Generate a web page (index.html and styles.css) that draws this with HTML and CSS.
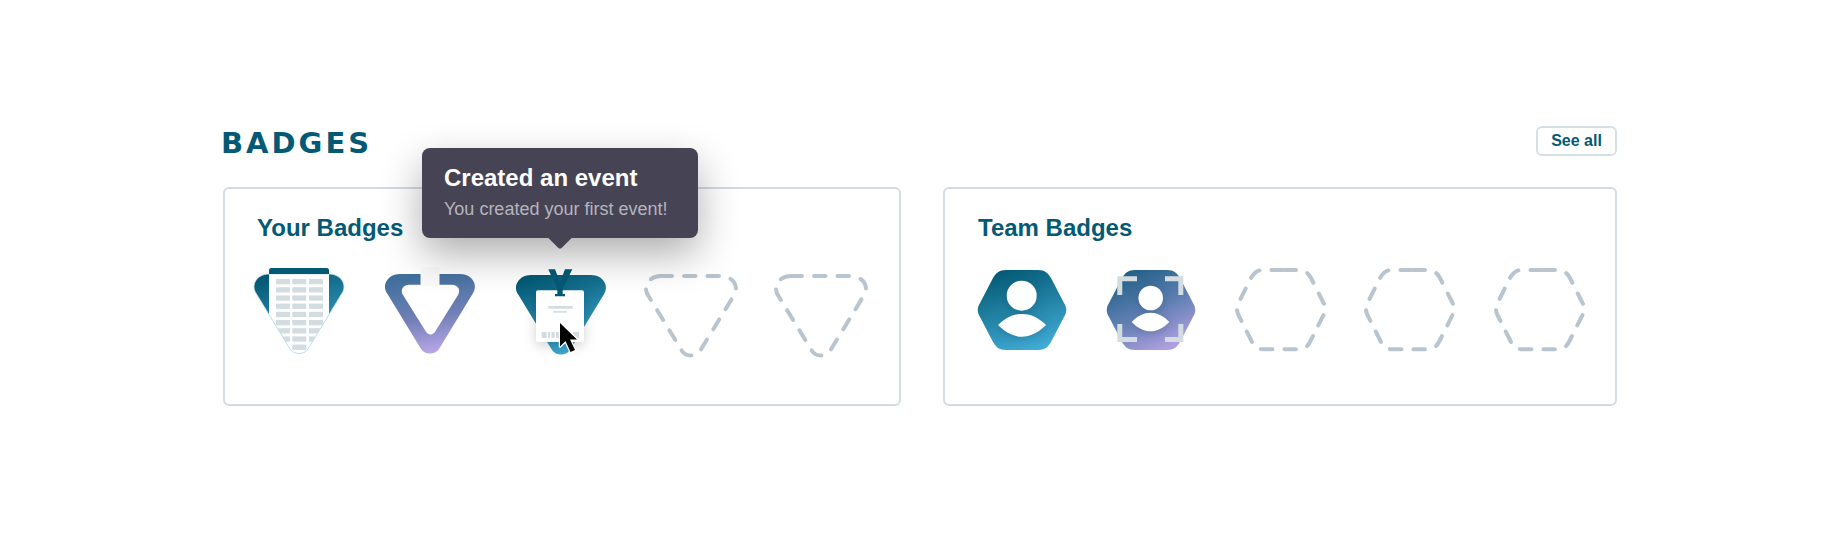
FILE: index.html
```html
<!DOCTYPE html>
<html lang="en">
<head>
    <meta charset="UTF-8">
    <title>Badges</title>
    <link rel="stylesheet" href="styles.css">
</head>
<body>
    <svg class="svg-defs" aria-hidden="true">
        <defs>
            <linearGradient id="grad-blue" x1="0.3" y1="0" x2="0.65" y2="1">
                <stop offset="0" stop-color="#045a75"/>
                <stop offset="1" stop-color="#41acd6"/>
            </linearGradient>
            <linearGradient id="grad-purple" x1="0.4" y1="0" x2="0.6" y2="1">
                <stop offset="0" stop-color="#3f6f9c"/>
                <stop offset="0.55" stop-color="#7280b8"/>
                <stop offset="1" stop-color="#bda8ea"/>
            </linearGradient>
            <linearGradient id="grad-purple-hex" x1="0.25" y1="0" x2="0.75" y2="1">
                <stop offset="0" stop-color="#1f5f85"/>
                <stop offset="0.5" stop-color="#5f7fb2"/>
                <stop offset="1" stop-color="#b7a2e4"/>
            </linearGradient>
            <path id="tri" d="M15 12H75C87 12 94 23 87.5 32L54 87C50 93 40 93 36 87L2.5 32C-4 23 3 12 15 12Z"/>
            <path id="tri-dash" d="M14.5 14H75C87 14 94 25 87.5 34L54 89C50 95 40 95 36 89L2.5 34C-4 25 3 14 14.5 14"/>
            <path id="hex" d="M32 8H64C71 8 74 11 77 16L90 41C93 46 93 50 90 55L77 80C74 85 71 88 64 88H32C25 88 22 85 19 80L6 55C3 50 3 46 6 41L19 16C22 11 25 8 32 8Z"/>
            <path id="hex-dash" d="M51.5 8H66C72 8 75 11 78 16L90.5 41C93 45 93 49 90.500 53L78 78C75 84 72 87.300 66 87.300H30C24 87.300 21 84 18 78L5.500 53C3.500 49 3.500 45 5.500 41L18 16C21 11 24 8 30 8H51.500"/>
            <clipPath id="tri-clip"><use href="#tri"/></clipPath>
        </defs>
    </svg>

    <section class="badges">
        <div class="badges-header">
            <h2 class="badges-title">BADGES</h2>
            <a class="see-all">See all</a>
        </div>

        <div class="badges-cards">
            <div class="card card-your">
                <h3 class="card-title">Your Badges</h3>
                <div class="badge-row">
                    <!-- building -->
                    <svg class="badge" viewBox="0 0 90 100">
                        <use href="#tri" fill="url(#grad-blue)"/>
                        <g clip-path="url(#tri-clip)">
                            <rect x="15" y="6" width="60" height="90" fill="#fff"/>
                            <g fill="#d3dce1">
                                <rect x="22" y="17" width="14" height="5.300"/><rect x="38.300" y="17" width="14" height="5.300"/><rect x="55" y="17" width="14" height="5.300"/>
                                <rect x="22" y="25.200" width="14" height="5.300"/><rect x="38.300" y="25.200" width="14" height="5.300"/><rect x="55" y="25.200" width="14" height="5.300"/>
                                <rect x="22" y="33.400" width="14" height="5.300"/><rect x="38.300" y="33.400" width="14" height="5.300"/><rect x="55" y="33.400" width="14" height="5.300"/>
                                <rect x="22" y="41.600" width="14" height="5.300"/><rect x="38.300" y="41.600" width="14" height="5.300"/><rect x="55" y="41.600" width="14" height="5.300"/>
                                <rect x="22" y="49.800" width="14" height="5.300"/><rect x="38.300" y="49.800" width="14" height="5.300"/><rect x="55" y="49.800" width="14" height="5.300"/>
                                <rect x="22" y="58" width="14" height="5.300"/><rect x="38.300" y="58" width="14" height="5.300"/><rect x="55" y="58" width="14" height="5.300"/>
                                <rect x="22" y="66.200" width="14" height="5.300"/><rect x="38.300" y="66.200" width="14" height="5.300"/><rect x="55" y="66.200" width="14" height="5.300"/>
                                <rect x="22" y="74.400" width="14" height="5.300"/><rect x="38.300" y="74.400" width="14" height="5.300"/><rect x="55" y="74.400" width="14" height="5.300"/>
                                <rect x="38.300" y="82.600" width="14" height="5.300"/>
                            </g>
                        </g>
                        <use href="#tri" fill="none" stroke="#bfe0ea" stroke-width="0.8"/>
                        <path d="M15 8C15 7 16 6 17 6H73C74 6 75 7 75 8V12H15Z" fill="#045a75"/>
                    </svg>
                    <!-- notch -->
                    <svg class="badge" viewBox="0 0 90 100">
                        <path fill="url(#grad-purple)" fill-rule="evenodd" d="M15 12H75C87 12 94 23 87.5 32L54 87C50 93 40 93 36 87L2.500 32C-4 23 3 12 15 12ZM24 22.700H67C73 22.700 76 28 73 33L50.500 69C48 73.500 43 73.500 40.500 69L18 33C15 28 18 22.700 24 22.700Z"/>
                        <path class="notch" d="M35.500 7C35.500 6 36.500 5 37.500 5H52.500C53.500 5 54.500 6 54.500 7V24H35.500Z"/>
                    </svg>
                    <!-- id card, hovered -->
                    <svg class="badge" viewBox="0 0 90 100">
                        <g transform="translate(1 1)"><use href="#tri" fill="url(#grad-blue)"/></g>
                        <rect class="id-card" x="21" y="28.300" width="48" height="51.700" rx="2"/>
                        <path d="M33.300 7.300H40L45 20L50 7.300H57.300L47.700 27V32H50V34.300H40V32H42.300V27Z" fill="#045a75"/>
                        <g fill="#d3dce1">
                            <rect x="33.300" y="44" width="24.400" height="2.700"/>
                            <rect x="38.300" y="49" width="13.400" height="1.700"/>
                            <rect x="26.700" y="70" width="5" height="6"/><rect x="33" y="70" width="2" height="6"/><rect x="36.500" y="70" width="3" height="6"/><rect x="41" y="70" width="3" height="6"/><rect x="58" y="70" width="6" height="6"/>
                        </g>
                        <path class="cursor" d="M45 61V84.500L50.500 79L55.500 90L60 88L55 77.500H62Z"/>
                    </svg>
                    <svg class="badge" viewBox="0 0 90 100"><use class="dashed" href="#tri-dash"/></svg>
                    <svg class="badge" viewBox="0 0 90 100"><use class="dashed" href="#tri-dash"/></svg>
                </div>

                <div class="tooltip">
                    <div class="tooltip-title">Created an event</div>
                    <div class="tooltip-text">You created your first event!</div>
                </div>
            </div>

            <div class="card card-team">
                <h3 class="card-title">Team Badges</h3>
                <div class="badge-row">
                    <svg class="badge" viewBox="0 0 96 100">
                        <use href="#hex" fill="url(#grad-blue)"/>
                        <g class="person">
                            <circle cx="47.700" cy="33.700" r="15"/>
                            <path d="M24 63C32 55 40 52 48 52C56 52 64 55 72 63C64 71 56 74.700 48 74.700C40 74.700 32 71 24 63Z"/>
                        </g>
                    </svg>
                    <svg class="badge" viewBox="0 0 96 100">
                        <use href="#hex" fill="url(#grad-purple-hex)"/>
                        <g class="person">
                            <circle cx="47.700" cy="36" r="12.300"/>
                            <path d="M28.700 60C35 53.500 41 50.700 47.500 50.700C54 50.700 60 53.500 66.300 60C60 66.500 54 69.300 47.500 69.300C41 69.300 35 66.500 28.700 60Z"/>
                        </g>
                        <path d="M16.800 33V16.800H34M62 16.800H77.800V33M77.800 62V77.500H62M34 77.500H16.800V62" fill="none" stroke="#d3dce1" stroke-width="5"/>
                    </svg>
                    <svg class="badge" viewBox="0 0 96 100"><use class="dashed" href="#hex-dash"/></svg>
                    <svg class="badge" viewBox="0 0 96 100"><use class="dashed" href="#hex-dash"/></svg>
                    <svg class="badge" viewBox="0 0 96 100"><use class="dashed" href="#hex-dash"/></svg>
                </div>
            </div>
        </div>
    </section>
</body>
</html>
```

FILE: styles.css
```css
body {
    margin: 0;
    background: #ffffff;
    font-family: 'Liberation Sans', Arial, sans-serif;
    color: #045a75;
}
.svg-defs {
    position: absolute;
    width: 0;
    height: 0;
}
.badges {
    padding: 126px 223px 0;
}
.badges-header {
    display: flex;
    align-items: flex-start;
    justify-content: space-between;
    height: 30px;
    margin-bottom: 31px;
}
.badges-title {
    margin: 0 0 0 -2px;
    font-family: 'DejaVu Sans', sans-serif;
    font-size: 29px;
    line-height: 34px;
    font-weight: 700;
    letter-spacing: 3px;
    color: #045a75;
}
.see-all {
    box-sizing: border-box;
    width: 81px;
    height: 30px;
    border: 2px solid #d5e0e3;
    border-radius: 6px;
    font-size: 16px;
    line-height: 26px;
    font-weight: 700;
    text-align: center;
}
.badges-cards {
    display: flex;
    gap: 42px;
}
.card {
    position: relative;
    box-sizing: border-box;
    height: 219px;
    padding: 25px 0 25px 29px;
    border: 2px solid #d0dce0;
    border-radius: 6px;
}
.card-your {
    flex: none;
    width: 678px;
}
.card-team {
    flex: 1;
    min-width: 0;
}
.card-title {
    margin: 0 0 20px;
    padding-left: 4px;
    font-size: 24px;
    line-height: 28px;
    font-weight: 700;
}
.card-your .card-title {
    padding-left: 3px;
}
.badge-row {
    display: flex;
}
.card-your .badge-row {
    gap: 40.5px;
}
.card-team .badge-row {
    gap: 33.4px;
}
.badge {
    display: block;
    flex: none;
    overflow: visible;
}
.card-your .badge {
    width: 90px;
    height: 100px;
}
.card-team .badge {
    width: 96px;
    height: 100px;
}
.dashed {
    fill: none;
    stroke: #b8c5cf;
    stroke-width: 4;
    stroke-linecap: round;
    stroke-dasharray: 11.5 12;
}
.notch {
    fill: #fafafa;
}
.cursor {
    fill: #000000;
    stroke: #ffffff;
    stroke-width: 2.5;
    stroke-linejoin: round;
    paint-order: stroke;
}
.id-card {
    fill: #ffffff;
    filter: drop-shadow(0 4px 6px rgba(0, 0, 0, 0.18));
}
.person {
    fill: #ffffff;
    filter: drop-shadow(0 2px 5px rgba(0, 40, 70, 0.2));
}
.tooltip {
    position: absolute;
    left: 197px;
    top: -41px;
    box-sizing: border-box;
    width: 276px;
    height: 90px;
    padding: 16px 22px;
    border-radius: 8px;
    background: #464454;
    box-shadow: 0 16px 40px rgba(0, 0, 0, 0.32);
}
.tooltip::after {
    content: "";
    position: absolute;
    left: 129px;
    bottom: -8px;
    width: 18px;
    height: 18px;
    border-radius: 3px;
    background: #464454;
    transform: rotate(45deg);
}
.tooltip-title {
    font-size: 24px;
    line-height: 28px;
    font-weight: 700;
    color: #ffffff;
}
.tooltip-text {
    margin-top: 6px;
    font-size: 18px;
    line-height: 22px;
    color: #b5b4bc;
}
```
